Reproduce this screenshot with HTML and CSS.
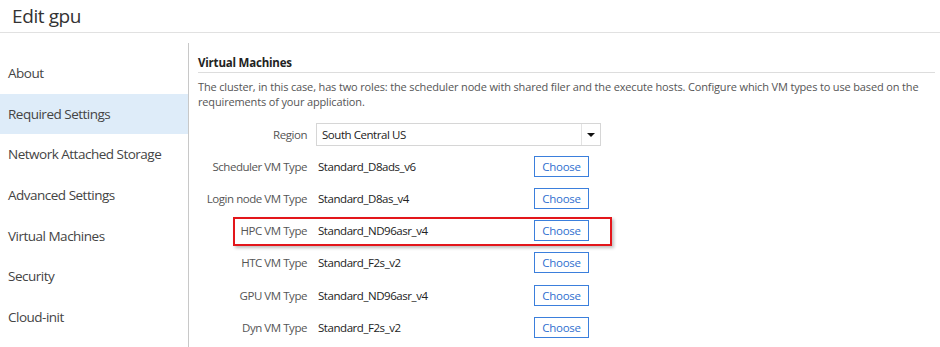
FILE: index.html
```html
<!DOCTYPE html>
<html lang="en">
<head>
  <meta charset="UTF-8" />
  <title>Edit gpu</title>
  <link rel="stylesheet" href="styles.css">
</head>
<body>

  <!-- HEADER -->
  <div class="header">Edit gpu</div>

  <div class="layout">
    <!-- SIDE MENU -->
    <ul class="menu">
      <li>About</li>
      <li class="active">Required Settings</li>
      <li>Network Attached Storage</li>
      <li>Advanced Settings</li>
      <li>Virtual Machines</li>
      <li>Security</li>
      <li>Cloud-init</li>
    </ul>

    <!-- FORM -->
    <div class="content">
      <h3 class="section-title">Virtual Machines</h3>
      <p class="section-text">The cluster, in this case, has two roles: the scheduler node with shared filer and the execute hosts. Configure which VM types to use based on the requirements of your application.</p>

      <div class="form">
        <div class="row">
          <label class="row-label">Region</label>
          <div class="select">
            <span class="select-value">South Central US</span>
            <span class="select-arrow"></span>
          </div>
        </div>
        <div class="row">
          <label class="row-label">Scheduler VM Type</label>
          <span class="row-value">Standard_D8ads_v6</span>
          <button class="choose-btn">Choose</button>
        </div>
        <div class="row">
          <label class="row-label">Login node VM Type</label>
          <span class="row-value">Standard_D8as_v4</span>
          <button class="choose-btn">Choose</button>
        </div>
        <div class="row highlighted">
          <label class="row-label">HPC VM Type</label>
          <span class="row-value">Standard_ND96asr_v4</span>
          <button class="choose-btn">Choose</button>
          <span class="callout"></span>
        </div>
        <div class="row">
          <label class="row-label">HTC VM Type</label>
          <span class="row-value">Standard_F2s_v2</span>
          <button class="choose-btn">Choose</button>
        </div>
        <div class="row">
          <label class="row-label">GPU VM Type</label>
          <span class="row-value">Standard_ND96asr_v4</span>
          <button class="choose-btn">Choose</button>
        </div>
        <div class="row">
          <label class="row-label">Dyn VM Type</label>
          <span class="row-value">Standard_F2s_v2</span>
          <button class="choose-btn">Choose</button>
        </div>
      </div>
    </div>
  </div>

</body>
</html>
```

FILE: styles.css
```css
* { margin: 0; padding: 0; box-sizing: border-box; }
body {
  background: #fff;
  font-family: "Open Sans", "Noto Sans", sans-serif;
  color: #333;
  overflow: hidden;
}
.header {
  height: 33px;
  padding-left: 12px;
  font-size: 19px;
  letter-spacing: -0.4px;
  line-height: 32px;
  color: #333;
  border-bottom: 1px solid #e1e1e1;
}
.layout {
  display: flex;
}

/* side menu */
.menu {
  list-style: none;
  width: 188px;
  padding-top: 20px;
}
.menu li {
  height: 40.7px;
  line-height: 40.7px;
  padding-left: 8px;
  font-size: 13.5px;
  letter-spacing: -0.5px;
  color: #444;
}
.menu li.active {
  background-color: #deecf9;
}

/* content */
.content {
  flex: 1;
  margin-top: 10px;
  height: 320px;
  border-left: 1px solid #c8c8c8;
  padding: 0 5px 0 9px;
}
.section-title {
  margin-top: 10px;
  font-size: 11.5px;
  font-weight: 700;
  letter-spacing: -0.2px;
  line-height: 19px;
  color: #222;
  border-bottom: 1px solid #ddd;
}
.section-text {
  margin-top: 6px;
  font-size: 11px;
  letter-spacing: -0.15px;
  line-height: 15px;
  color: #555;
}

.form {
  margin-top: 9px;
}
.row {
  position: relative;
  display: flex;
  align-items: center;
  height: 32.2px;
  font-size: 11.5px;
  letter-spacing: -0.45px;
}
.row-label {
  width: 109px;
  text-align: right;
  color: #555;
  white-space: nowrap;
}
.row-value {
  width: 216px;
  margin-left: 11px;
  color: #222;
}
.select {
  display: flex;
  align-items: center;
  width: 285px;
  height: 23px;
  margin-left: 9px;
  border: 1px solid #d6d6d6;
}
.select-value {
  flex: 1;
  padding-left: 5px;
  color: #222;
}
.select-arrow {
  position: relative;
  width: 19px;
  height: 100%;
  border-left: 1px solid #e3e3e3;
}
.select-arrow::after {
  content: "";
  position: absolute;
  left: 5px;
  top: 9px;
  border-left: 4px solid transparent;
  border-right: 4px solid transparent;
  border-top: 4px solid #111;
}
.choose-btn {
  width: 55px;
  height: 21px;
  border: 1px solid #3b7fdc;
  background: #fff;
  color: #2f6fcf;
  font-family: inherit;
  font-size: 11.5px;
  letter-spacing: -0.3px;
}

/* red annotation box */
.callout {
  position: absolute;
  left: 35px;
  top: 2px;
  width: 379px;
  height: 29px;
  border: 2px solid #e3161b;
  box-shadow: 2px 2px 3px rgba(0, 0, 0, 0.25);
  pointer-events: none;
}
```
